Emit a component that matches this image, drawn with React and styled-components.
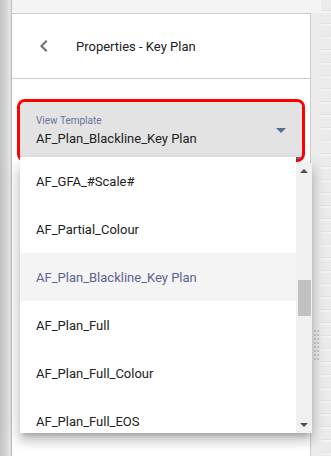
import React from 'react';
import styled, { createGlobalStyle } from 'styled-components';

const templates = [
  'AF_GFA_#Scale#',
  'AF_Partial_Colour',
  'AF_Plan_Blackline_Key Plan',
  'AF_Plan_Full',
  'AF_Plan_Full_Colour',
  'AF_Plan_Full_EOS',
];

const selected = 'AF_Plan_Blackline_Key Plan';

export default function App() {
  return (
    <Page>
      <GlobalStyle />
      <SideShade />
      <Main>
        <TopBar />
        <Panel>
          <Header>
            <BackButton aria-label="Back">
              <svg width="24" height="24" viewBox="0 0 24 24">
                <path d="M15.41 7.41L14 6l-6 6 6 6 1.41-1.41L10.83 12z" fill="currentColor" />
              </svg>
            </BackButton>
            <Title>Properties - Key Plan</Title>
          </Header>
          <Body>
            <Highlight>
              <Field>
                <FieldText>
                  <Label>View Template</Label>
                  <Value>{selected}</Value>
                </FieldText>
                <Caret />
              </Field>
            </Highlight>
            <Menu>
              <Options>
                {templates.map(t => (
                  <Option key={t} active={t === selected}>{t}</Option>
                ))}
              </Options>
              <Scrollbar>
                <ScrollButton><Arrow up /></ScrollButton>
                <Track>
                  <Thumb style={{ marginTop: 101 }} />
                </Track>
                <ScrollButton><Arrow /></ScrollButton>
              </Scrollbar>
            </Menu>
          </Body>
        </Panel>
      </Main>
      <Gutter>
        <GripColumn>
          <Grip />
        </GripColumn>
        <Rail />
      </Gutter>
    </Page>
  );
}

const GlobalStyle = createGlobalStyle`
  html, body {
    margin: 0;
    padding: 0;
    background: #ffffff;
  }
  body {
    font-family: Roboto, "Liberation Sans", sans-serif;
    -webkit-font-smoothing: antialiased;
  }
`;

const Page = styled.div`
  display: flex;
  width: 331px;
  height: 456px;
  overflow: hidden;
`;

const SideShade = styled.div`
  width: 11px;
  flex-shrink: 0;
  background: linear-gradient(to right, #c2c2c2 0%, #d4d4d4 55%, #e4e4e4 85%, #dcdcdc 100%);
`;

const Main = styled.div`
  display: flex;
  flex-direction: column;
  width: 300px;
  flex-shrink: 0;
  border-left: 1px solid #bdbdbd;
  box-sizing: border-box;
`;

const TopBar = styled.div`
  height: 13px;
  background: #f4f4f4;
`;

const Panel = styled.div`
  flex: 1;
  display: flex;
  flex-direction: column;
  background: #ffffff;
  border-top: 1px solid #cccccc;
  border-right: 1px solid #cccccc;
`;

const Header = styled.div`
  display: flex;
  align-items: center;
  gap: 20px;
  height: 64px;
  padding-left: 20px;
  border-bottom: 1px solid #cccccc;
`;

const BackButton = styled.button`
  display: flex;
  padding: 0;
  border: none;
  background: none;
  color: #6e6e6e;
  cursor: pointer;
`;

const Title = styled.div`
  font-size: 13px;
  color: #212121;
`;

const Body = styled.div`
  position: relative;
  flex: 1;
  padding: 20px 0 0 5px;
`;

const Highlight = styled.div`
  width: 288px;
  box-sizing: border-box;
  border: 3px solid #ff0000;
  border-radius: 8px;
  overflow: hidden;
`;

const Field = styled.div`
  display: flex;
  align-items: center;
  justify-content: space-between;
  height: 57px;
  box-sizing: border-box;
  padding: 0 16px 0 16px;
  background: #e3e3e3;
  border-bottom: 2px solid #4d5f8f;
`;

const FieldText = styled.div`
  display: flex;
  flex-direction: column;
  gap: 3px;
  padding-top: 4px;
`;

const Label = styled.div`
  font-size: 10px;
  line-height: 12px;
  color: #6d7399;
`;

const Value = styled.div`
  font-size: 13px;
  line-height: 18px;
  color: #212121;
`;

const Caret = styled.div`
  width: 0;
  height: 0;
  border-left: 5px solid transparent;
  border-right: 5px solid transparent;
  border-top: 5px solid #5a6a96;
  margin-top: 2px;
`;

const Menu = styled.div`
  position: absolute;
  top: 84px;
  left: 8px;
  width: 292px;
  height: 270px;
  display: flex;
  background: #ffffff;
  box-shadow: 0 8px 10px 1px rgba(0, 0, 0, 0.14), 0 3px 14px 2px rgba(0, 0, 0, 0.12),
    0 5px 5px -3px rgba(0, 0, 0, 0.2);
  z-index: 2;
`;

const Options = styled.ul`
  flex: 1;
  list-style: none;
  margin: -6px 0 0 0;
  padding: 0;
  overflow: hidden;
`;

const Option = styled.li`
  height: 48px;
  display: flex;
  align-items: center;
  padding-left: 16px;
  font-size: 13px;
  color: ${p => (p.active ? '#5b6393' : '#212121')};
  background: ${p => (p.active ? '#f4f4f4' : '#ffffff')};
`;

const Scrollbar = styled.div`
  width: 16px;
  display: flex;
  flex-direction: column;
  background: #f1f1f1;
`;

const ScrollButton = styled.div`
  height: 16px;
  display: flex;
  align-items: center;
  justify-content: center;
`;

const Arrow = styled.div`
  width: 0;
  height: 0;
  border-left: 4px solid transparent;
  border-right: 4px solid transparent;
  ${p => (p.up ? 'border-bottom: 4px solid #505050;' : 'border-top: 4px solid #505050;')}
`;

const Track = styled.div`
  flex: 1;
  display: flex;
  justify-content: center;
`;

const Thumb = styled.div`
  width: 13px;
  height: 36px;
  background: #c1c1c1;
`;

const Gutter = styled.div`
  flex: 1;
  display: flex;
  background: linear-gradient(to bottom, #f4f4f4 0 13px, #ececec 13px);
`;

const GripColumn = styled.div`
  width: 10px;
  display: flex;
  justify-content: center;
  padding-top: 329px;
  box-sizing: border-box;
`;

const Grip = styled.div`
  width: 7px;
  height: 32px;
  background-image: radial-gradient(circle, #c4c4c4 1.1px, transparent 1.3px);
  background-size: 3.5px 4px;
`;

const Rail = styled.div`
  flex: 1;
  background: repeating-linear-gradient(
    to bottom,
    #ebebeb 0px,
    #ebebeb 10px,
    #e2e2e2 10px,
    #e2e2e2 11px,
    #f3f3f3 11px,
    #f3f3f3 13px
  );
`;
